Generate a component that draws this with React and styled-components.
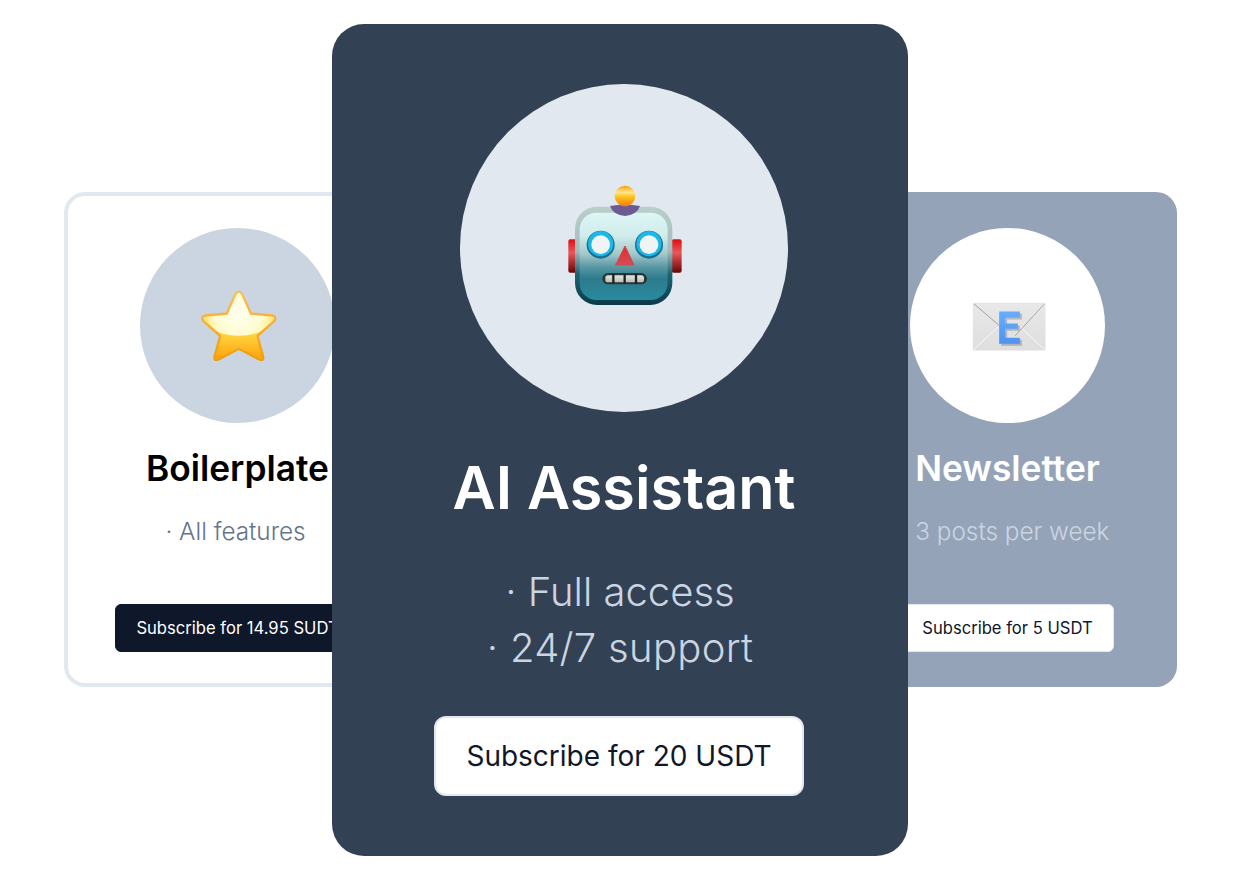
import React from "react";
import styled, { createGlobalStyle } from "styled-components";

const Global = createGlobalStyle`
  * { box-sizing: border-box; }
  html, body { margin: 0; padding: 0; background: #fff; }
  body { font-family: Inter, "Liberation Sans", sans-serif; }
`;

const Stage = styled.div`
  width: 1240px;
  height: 880px;
  padding: 24px 0 24px 64px;
  display: flex;
  align-items: flex-start;
  overflow: hidden;
`;

const SideCard = styled.section`
  position: relative;
  z-index: ${(p) => (p.$side === "left" ? 1 : 0)};
  flex: none;
  width: ${(p) => (p.$side === "left" ? 347 : 339)}px;
  height: 495px;
  margin: ${(p) => (p.$side === "left" ? "168px -79px 0 0" : "168px 0 0 -70px")};
  padding-top: ${(p) => (p.$side === "left" ? 32 : 36)}px;
  border-radius: 21px;
  display: flex;
  flex-direction: column;
  align-items: center;
  overflow: hidden;
  background: ${(p) => (p.$side === "left" ? "#fff" : "#94a3b8")};
  border: ${(p) => (p.$side === "left" ? "4px solid #e2e8f0" : "none")};
`;

const MainCard = styled.section`
  position: relative;
  z-index: 2;
  flex: none;
  width: 576px;
  height: 832px;
  padding: 60px 0 0 8px;
  border-radius: 32px;
  background: #334155;
  display: flex;
  flex-direction: column;
  align-items: center;
`;

const Circle = styled.div`
  flex: none;
  width: ${(p) => p.$size}px;
  height: ${(p) => p.$size}px;
  border-radius: 50%;
  background: ${(p) => p.$bg};
  display: flex;
  align-items: center;
  justify-content: center;
`;

const SideTitle = styled.h2`
  margin: 26px 0 0;
  font-size: 35.3px;
  line-height: 40px;
  font-weight: 600;
  white-space: nowrap;
  color: ${(p) => p.$color};
`;

const MainTitle = styled.h1`
  margin: 40px 0 0;
  font-size: 59.3px;
  line-height: 72px;
  font-weight: 600;
  color: #fff;
`;

const SideFeature = styled.p`
  margin: 26px 4px 0 0;
  font-size: 24.3px;
  line-height: 32px;
  font-weight: 300;
  white-space: nowrap;
  color: ${(p) => p.$color};
`;

const MainFeatures = styled.div`
  margin: 40px 8px 0 0;
  font-size: 40px;
  line-height: 56px;
  font-weight: 300;
  color: #cbd5e1;
  text-align: center;
`;

const FeatureLine = styled.div`
  letter-spacing: ${(p) => p.$spacing || 0}px;
`;

const SideButton = styled.button`
  flex: none;
  margin-top: 57px;
  height: 48px;
  padding: 0 20px;
  border-radius: 6px;
  border: 1px solid ${(p) => (p.$dark ? "#0f172a" : "#e2e8f0")};
  background: ${(p) => (p.$dark ? "#0f172a" : "#fff")};
  color: ${(p) => (p.$dark ? "#fff" : "#0f172a")};
  font: 400 16.6px/24px Inter, sans-serif;
  white-space: nowrap;
`;

const MainButton = styled.button`
  flex: none;
  margin: 40px 10px 0 0;
  height: 80px;
  width: 370px;
  border-radius: 12px;
  border: 2px solid #e2e8f0;
  background: #fff;
  color: #0f172a;
  font: 400 28px/36px Inter, sans-serif;
  white-space: nowrap;
`;

const Emoji = styled.svg`
  display: block;
  flex: none;
  filter: blur(${(p) => p.$blur}px);
`;

const STAR =
  "M145 34 Q153 34 158 47 L181 99 L245 105 Q259 108 252 121 L201 166 L218 229 Q220 242 206 237 L145 205 L84 237 Q70 242 72 229 L89 166 L38 121 Q31 108 45 105 L109 99 L132 47 Q137 34 145 34 Z";

const Star = () => (
  <Emoji $blur={0.7} width="100" height="90" viewBox="-7.5 1.5 300 270">
    <defs>
      <linearGradient id="starBase" x1="0" y1="140" x2="0" y2="235" gradientUnits="userSpaceOnUse">
        <stop offset="0" stopColor="#ffe24e" />
        <stop offset="1" stopColor="#ffa30c" />
      </linearGradient>
      <radialGradient id="starTop" cx="145" cy="100" r="118" gradientUnits="userSpaceOnUse">
        <stop offset="0" stopColor="#fffff0" />
        <stop offset="0.6" stopColor="#fffcd0" />
        <stop offset="1" stopColor="#ffe060" />
      </radialGradient>
      <linearGradient id="starEdge" x1="0" y1="34" x2="0" y2="240" gradientUnits="userSpaceOnUse">
        <stop offset="0" stopColor="#fbbf55" />
        <stop offset="1" stopColor="#ef9d10" />
      </linearGradient>
      <clipPath id="starClip">
        <path d={STAR} />
      </clipPath>
    </defs>
    <path d={STAR} fill="url(#starBase)" />
    <ellipse cx="145" cy="78" rx="130" ry="88" fill="url(#starTop)" clipPath="url(#starClip)" />
    <path d={STAR} fill="none" stroke="url(#starEdge)" strokeWidth="7" strokeLinejoin="round" />
  </Emoji>
);

const Robot = () => (
  <Emoji $blur={0.45} width="150" height="150" viewBox="-3 9 450 450">
    <defs>
      <linearGradient id="head" x1="0" y1="125" x2="0" y2="390" gradientUnits="userSpaceOnUse">
        <stop offset="0" stopColor="#def6f5" />
        <stop offset="0.28" stopColor="#cfeceb" />
        <stop offset="0.48" stopColor="#a3c8ca" />
        <stop offset="0.62" stopColor="#5c99a5" />
        <stop offset="0.76" stopColor="#2b7b8c" />
        <stop offset="1" stopColor="#2a8a9e" />
      </linearGradient>
      <linearGradient id="rim" x1="0" y1="110" x2="0" y2="405" gradientUnits="userSpaceOnUse">
        <stop offset="0" stopColor="#b9cfcb" />
        <stop offset="0.45" stopColor="#a3bcbb" />
        <stop offset="0.68" stopColor="#1e6473" />
        <stop offset="1" stopColor="#0a3a48" />
      </linearGradient>
      <linearGradient id="ear" x1="0" y1="208" x2="0" y2="308" gradientUnits="userSpaceOnUse">
        <stop offset="0" stopColor="#e00d14" />
        <stop offset="0.4" stopColor="#e8585a" />
        <stop offset="1" stopColor="#6a0303" />
      </linearGradient>
      <linearGradient id="ball" x1="0" y1="50" x2="0" y2="106" gradientUnits="userSpaceOnUse">
        <stop offset="0" stopColor="#ffa51e" />
        <stop offset="0.3" stopColor="#ffe88a" />
        <stop offset="0.55" stopColor="#ffc21c" />
        <stop offset="1" stopColor="#f5800c" />
      </linearGradient>
      <linearGradient id="nose" x1="0" y1="228" x2="0" y2="286" gradientUnits="userSpaceOnUse">
        <stop offset="0" stopColor="#e8262c" />
        <stop offset="1" stopColor="#cf5156" />
      </linearGradient>
      <linearGradient id="teeth" x1="0" y1="315" x2="0" y2="337" gradientUnits="userSpaceOnUse">
        <stop offset="0" stopColor="#e8e8de" />
        <stop offset="1" stopColor="#bcbdb4" />
      </linearGradient>
    </defs>
    <rect x="55" y="208" width="30" height="100" rx="6" fill="url(#ear)" />
    <rect x="365" y="208" width="30" height="100" rx="6" fill="url(#ear)" />
    <rect x="75" y="110" width="292" height="295" rx="66" fill="url(#rim)" />
    <rect x="89" y="128" width="264" height="262" rx="50" fill="url(#head)" />
    <path d="M180 108 Q225 100 270 108 Q262 134 225 138 Q188 134 180 108 Z" fill="#6d5a92" />
    <circle cx="225" cy="78" r="31" fill="url(#ball)" />
    {[152, 297].map((cx) => (
      <g key={cx}>
        <circle cx={cx} cy="224" r="42" fill="#17708f" />
        <circle cx={cx} cy="221" r="38" fill="#1db8ea" />
        <circle cx={cx} cy="224" r="28" fill="#f1f4f5" />
      </g>
    ))}
    <path d="M225 228 L252 285 L197 285 Z" fill="url(#nose)" stroke="#c9484e" strokeWidth="3" strokeLinejoin="round" />
    <rect x="157" y="309" width="134" height="34" rx="17" fill="#24383e" />
    <rect x="166" y="316" width="116" height="21" rx="8" fill="url(#teeth)" />
    {[190, 224, 258].map((x) => (
      <rect key={x} x={x - 3.5} y="311" width="7" height="30" fill="#1c2224" />
    ))}
  </Emoji>
);

const Envelope = () => (
  <Emoji $blur={0.6} width="100" height="80" viewBox="-7.5 1.5 300 240">
    <defs>
      <linearGradient id="paper" x1="0" y1="52" x2="0" y2="195" gradientUnits="userSpaceOnUse">
        <stop offset="0" stopColor="#e8e8e8" />
        <stop offset="1" stopColor="#dedede" />
      </linearGradient>
      <linearGradient id="letter" x1="0" y1="78" x2="0" y2="175" gradientUnits="userSpaceOnUse">
        <stop offset="0" stopColor="#66adff" />
        <stop offset="1" stopColor="#4d94f2" />
      </linearGradient>
    </defs>
    <rect x="37" y="52" width="218" height="143" rx="4" fill="url(#paper)" />
    <path d="M40 192 L112 125 M252 192 L180 125" stroke="#f8f8f8" strokeWidth="3" fill="none" />
    <path d="M40 55 L128 130" stroke="#a2a2a2" strokeWidth="3" fill="none" />
    <path d="M122 84 H184 V102 H140 V120 H178 V136 H140 V163 H184 V181 H122 Z" fill="#555f6c" opacity="0.35" />
    <path d="M116 78 H178 V96 H134 V114 H172 V130 H134 V157 H178 V175 H116 Z" fill="url(#letter)" />
    <path d="M163 152 L252 55" stroke="#9a9a9a" strokeWidth="2.5" />
  </Emoji>
);

export default function App() {
  return (
    <>
      <Global />
      <Stage>
        <SideCard $side="left">
          <Circle $size={195} $bg="#cbd5e1">
            <Star />
          </Circle>
          <SideTitle $color="#000">Boilerplate</SideTitle>
          <SideFeature $color="#64748b">· All features</SideFeature>
          <SideButton $dark>Subscribe for 14.95 SUDT</SideButton>
        </SideCard>
        <MainCard>
          <Circle $size={328} $bg="#e2e8f0">
            <Robot />
          </Circle>
          <MainTitle>AI Assistant</MainTitle>
          <MainFeatures>
            <FeatureLine>· Full access</FeatureLine>
            <FeatureLine $spacing={0.3}>· 24/7 support</FeatureLine>
          </MainFeatures>
          <MainButton>Subscribe for 20 USDT</MainButton>
        </MainCard>
        <SideCard $side="right">
          <Circle $size={195} $bg="#fff">
            <Envelope />
          </Circle>
          <SideTitle $color="#fff">Newsletter</SideTitle>
          <SideFeature $color="#cbd5e1">· 3 posts per week</SideFeature>
          <SideButton>Subscribe for 5 USDT</SideButton>
        </SideCard>
      </Stage>
    </>
  );
}
